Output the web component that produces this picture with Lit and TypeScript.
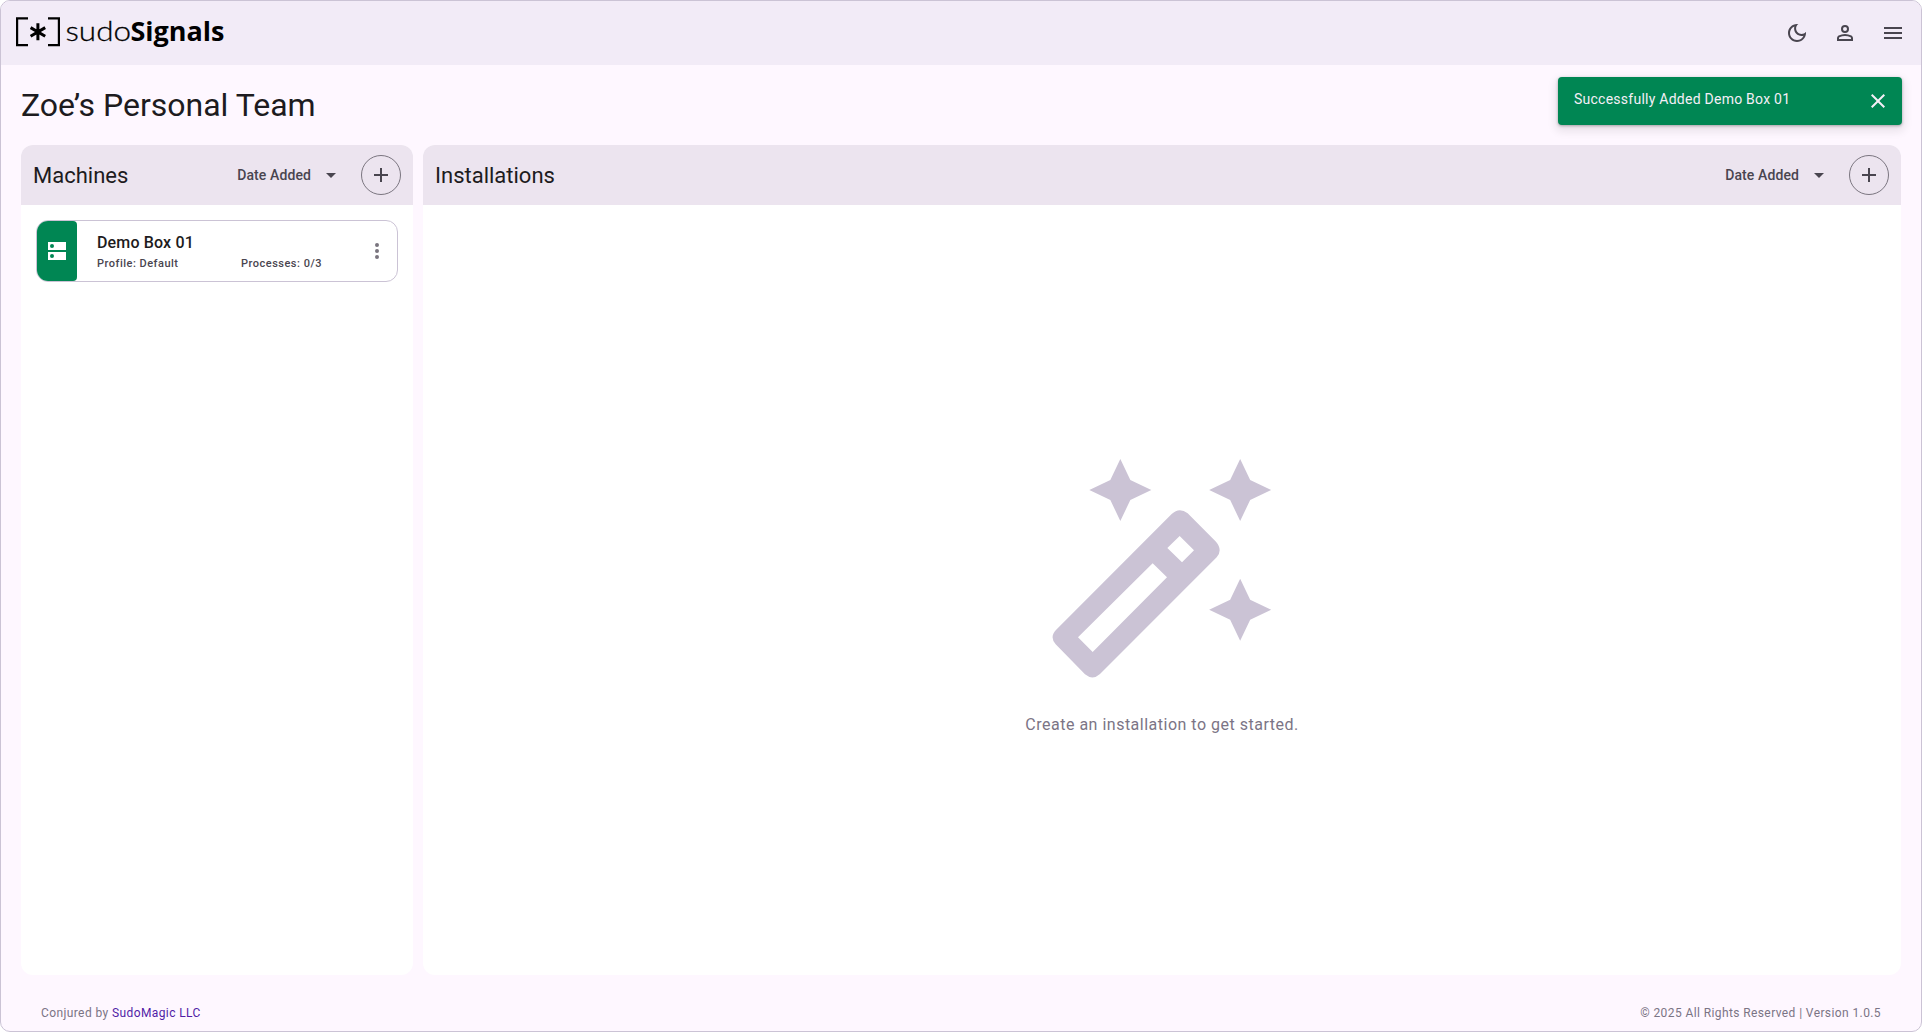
import { LitElement, html, css, svg } from "lit";
import { customElement, property } from "lit/decorators.js";

const icons = {
  moon: svg`<path d="M9.37 5.51C9.19 6.15 9.1 6.82 9.1 7.5c0 4.08 3.32 7.4 7.4 7.4.68 0 1.35-.09 1.99-.27C17.45 17.19 14.93 19 12 19c-3.86 0-7-3.14-7-7 0-2.93 1.81-5.45 4.37-6.49zM12 3c-4.97 0-9 4.03-9 9s4.03 9 9 9 9-4.03 9-9c0-.46-.04-.92-.1-1.36-.98 1.37-2.58 2.26-4.4 2.26-2.98 0-5.4-2.42-5.4-5.4 0-1.81.89-3.42 2.26-4.4-.44-.06-.9-.1-1.36-.1z"/>`,
  person: svg`<path d="M12 12a4 4 0 1 1 0-8 4 4 0 0 1 0 8zM4 20v-2.8c0-.57.15-1.09.44-1.56.29-.48.68-.84 1.16-1.09A14.8 14.8 0 0 1 12 13a14.8 14.8 0 0 1 6.4 1.55c.48.25.87.61 1.16 1.09.29.47.44.99.44 1.56V20H4zm2-2h12v-.8a.97.97 0 0 0-.5-.85A12.8 12.8 0 0 0 12 15a12.8 12.8 0 0 0-5.5 1.35.97.97 0 0 0-.5.85v.8zm6-8a2 2 0 1 0 0-4 2 2 0 0 0 0 4z"/>`,
  menu: svg`<path d="M3 18h18v-2H3v2zm0-5h18v-2H3v2zm0-7v2h18V6H3z"/>`,
  close: svg`<path d="M19 6.41 17.59 5 12 10.59 6.41 5 5 6.41 10.59 12 5 17.59 6.41 19 12 13.41 17.59 19 19 17.59 13.41 12z"/>`,
  add: svg`<path d="M19 13h-6v6h-2v-6H5v-2h6V5h2v6h6v2z"/>`,
  drop: svg`<path d="M7 10l5 5 5-5z"/>`,
  more: svg`<path d="M12 8a2 2 0 1 0 0-4 2 2 0 0 0 0 4zm0 2a2 2 0 1 0 0 4 2 2 0 0 0 0-4zm0 6a2 2 0 1 0 0 4 2 2 0 0 0 0-4z"/>`,
  server: svg`<path fill-rule="evenodd" d="M3 3h18v8H3zM7 5a2 2 0 1 0 0 4 2 2 0 0 0 0-4zM3 13h18v8H3zM7 15a2 2 0 1 0 0 4 2 2 0 0 0 0-4z"/>`,
};

const icon = (name: keyof typeof icons) =>
  html`<svg class="icon" viewBox="0 0 24 24" aria-hidden="true">${icons[name]}</svg>`;

const shared = css`
  * { box-sizing: border-box; }
  .icon { width: 24px; height: 24px; display: block; fill: currentColor; flex: none; }
  button { background: none; border: 0; padding: 0; margin: 0; color: inherit; font: inherit; display: grid; place-items: center; }
`;

@customElement("signals-logo")
class SignalsLogo extends LitElement {
  static styles = css`
    :host { display: block; color: #000; }
    .logo { width: 216px; height: 64px; display: block; fill: currentColor; }
    .bracket { fill: none; stroke: currentColor; stroke-width: 2.2; }
    .star { fill: none; stroke: currentColor; stroke-width: 3; }
    .light { font: 300 28px Lato, "Open Sans", sans-serif; stroke: currentColor; stroke-width: 0.3; }
    .bold { font: 700 27.5px "Open Sans", Lato, sans-serif; }
  `;
  render() {
    return html`
      <svg class="logo" viewBox="15 1 216 64" role="img" aria-label="sudoSignals">
        <path class="bracket" d="M28 18.4H17.1v26.8H28M48 18.4h10.9v26.8H48" />
        <path class="star" d="M37.9 23.3v17M30.6 27.6l14.6 8.6M45.2 27.6l-14.6 8.6" />
        <text class="light" x="65.5" y="41" textLength="65.5" lengthAdjust="spacingAndGlyphs">sudo</text>
        <text class="bold" x="130.5" y="41" textLength="94" lengthAdjust="spacingAndGlyphs">Signals</text>
      </svg>
    `;
  }
}

@customElement("board-panel")
class BoardPanel extends LitElement {
  @property() heading = "";
  static styles = [shared, css`
    :host { display: flex; flex-direction: column; background: #fff; border-radius: 12px; overflow: hidden; min-width: 0; }
    .head { height: 60px; flex: none; display: flex; align-items: center; padding: 0 12px; background: #ece4ef; color: #1d1b20; }
    .heading { font-size: 22px; line-height: 28px; font-weight: 400; margin: 0; padding-top: 2px; flex: 1; }
    .sort { display: flex; align-items: center; gap: 8px; margin-right: 18px; color: #49454f; }
    .label { font-size: 14px; line-height: 20px; font-weight: 500; letter-spacing: 0.1px; }
    .add { width: 40px; height: 40px; border: 1px solid #7a757f; border-radius: 50%; color: #49454f; }
    .body { flex: 1; display: flex; flex-direction: column; }
  `];
  render() {
    return html`
      <header class="head">
        <h2 class="heading">${this.heading}</h2>
        <div class="sort"><span class="label">Date Added</span>${icon("drop")}</div>
        <button class="add" aria-label="Add">${icon("add")}</button>
      </header>
      <div class="body"><slot></slot></div>
    `;
  }
}

@customElement("machine-card")
class MachineCard extends LitElement {
  @property() name = "";
  @property() profile = "";
  @property() processes = "";
  static styles = [shared, css`
    :host { display: flex; height: 62px; margin: 15px 15px 0; border: 1px solid #cbc3d5; border-radius: 12px; background: #fff; overflow: hidden; }
    .status { width: 40px; display: grid; place-items: center; background: #008653; color: #fff; border-radius: 0 4px 4px 0; }
    .info { flex: 1; display: flex; flex-direction: column; justify-content: center; padding-left: 20px; }
    .name { font-size: 16px; line-height: 24px; font-weight: 500; letter-spacing: 0.15px; color: #1d1b20; }
    .meta { display: grid; grid-template-columns: 144px 1fr; padding-top: 1px; margin-bottom: -1px; font-size: 11px; line-height: 16px; font-weight: 500; letter-spacing: 0.5px; color: #49454f; }
    .more { width: 40px; color: #79747e; }
  `];
  render() {
    return html`
      <div class="status">${icon("server")}</div>
      <div class="info">
        <div class="name">${this.name}</div>
        <div class="meta"><span>Profile: ${this.profile}</span><span>Processes: ${this.processes}</span></div>
      </div>
      <button class="more" aria-label="More">${icon("more")}</button>
    `;
  }
}

@customElement("empty-state")
class EmptyState extends LitElement {
  static styles = css`
    :host { flex: 1; display: flex; flex-direction: column; align-items: center; padding-top: 253px; }
    .wand { width: 224px; height: 220px; display: block; fill: #cbc3d5; }
    .text { margin: 35px 0 0; font-size: 16px; line-height: 24px; letter-spacing: 0.5px; color: #7b7485; }
  `;
  render() {
    const star = "M0-93 30-30 93 0 30 30 0 93-30 30-93 0-30-30z";
    return html`
      <svg class="wand" viewBox="90 54 672 660" aria-hidden="true">
        <path transform="translate(301 150)" d=${star} />
        <path transform="translate(660.5 150)" d=${star} />
        <path transform="translate(660.5 509)" d=${star} />
        <path fill-rule="evenodd" d="M455 222Q478 200 503 220L588 305Q609 330 590 352L240 702Q218 722 195 703L107 613Q87 590 110 568ZM398 370 174 592 218 636 441 412ZM479 288 442 324 486 367 522 331Z" />
      </svg>
      <p class="text">Create an installation to get started.</p>
    `;
  }
}

@customElement("app-root")
class AppRoot extends LitElement {
  static styles = [shared, css`
    :host { display: block; height: 100vh; font-family: Roboto, "Liberation Sans", sans-serif; background: #fff; }
    .frame { height: 100%; display: flex; flex-direction: column; border: 1px solid #cbc3d5; border-radius: 10px; overflow: hidden; background: #fef7ff; position: relative; }
    .bar { height: 64px; flex: none; display: flex; align-items: center; justify-content: space-between; padding: 0 4px 0 14px; background: #f2ebf7; }
    .actions { display: flex; color: #49454f; }
    .actions button { width: 48px; height: 48px; }
    .title { height: 80px; flex: none; margin: 0; padding-left: 20px; font-size: 32px; line-height: 80px; font-weight: 400; color: #1d1b20; }
    .board { height: 830px; flex: none; display: grid; grid-template-columns: 392px 1fr; gap: 10px; padding: 0 20px; }
    .foot { flex: 1; display: flex; align-items: center; justify-content: space-between; padding: 20px 40px 0; font-size: 12px; line-height: 16px; letter-spacing: 0.4px; color: #7b7485; }
    .link { color: #511da6; text-decoration: none; }
    .toast { position: absolute; top: 76px; right: 19px; width: 344px; height: 48px; display: flex; align-items: center; justify-content: space-between; padding: 0 12px 0 16px; border-radius: 4px; background: #008653; color: #f5eff7; box-shadow: 0 1px 3px rgba(0,0,0,.3), 0 4px 8px 3px rgba(0,0,0,.08); }
    .message { font-size: 14px; line-height: 20px; letter-spacing: 0.25px; margin-bottom: 4px; }
  `];
  render() {
    return html`
      <div class="frame">
        <header class="bar">
          <signals-logo></signals-logo>
          <nav class="actions">
            <button aria-label="Theme">${icon("moon")}</button>
            <button aria-label="Account">${icon("person")}</button>
            <button aria-label="Menu">${icon("menu")}</button>
          </nav>
        </header>
        <h1 class="title">Zoe’s Personal Team</h1>
        <main class="board">
          <board-panel heading="Machines">
            <machine-card name="Demo Box 01" profile="Default" processes="0/3"></machine-card>
          </board-panel>
          <board-panel heading="Installations"><empty-state></empty-state></board-panel>
        </main>
        <footer class="foot">
          <span>Conjured by <a class="link">SudoMagic LLC</a></span>
          <span>© 2025 All Rights Reserved | Version 1.0.5</span>
        </footer>
        <div class="toast" role="status">
          <span class="message">Successfully Added Demo Box 01</span>
          <button aria-label="Close">${icon("close")}</button>
        </div>
      </div>
    `;
  }
}
